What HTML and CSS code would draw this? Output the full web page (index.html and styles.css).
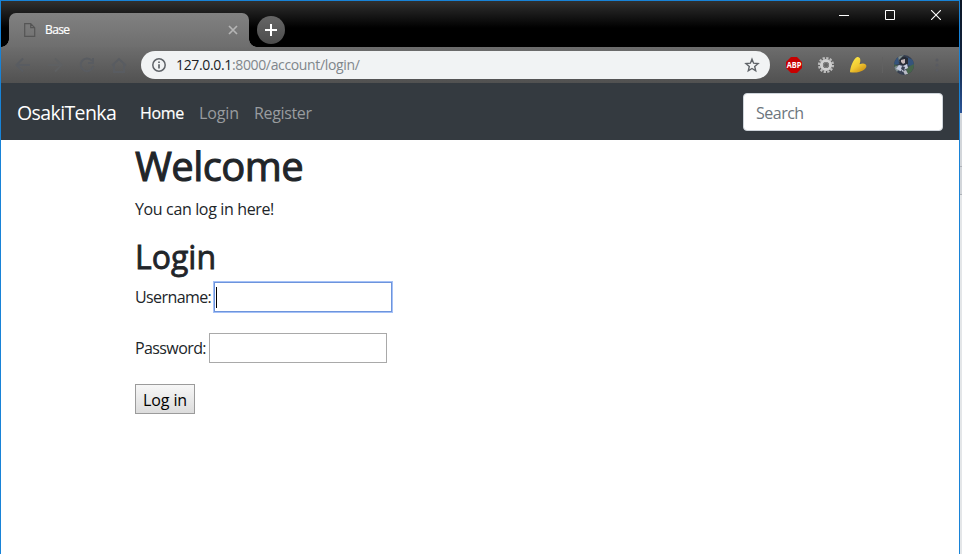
FILE: index.html
```
<!DOCTYPE html>
<html lang="en">
<head>
<meta charset="utf-8">
<title>Base</title>
<link rel="stylesheet" href="styles.css">
</head>
<body>
<div class="desktop">
<div class="window">
  <div class="tabstrip">
    <div class="tab">
      <svg class="file" width="12" height="14" viewBox="0 0 12 14" fill="none" stroke="#555" stroke-width="1.2"><path d="M.7.7h6l4 4v8.6H.7zM6.7.7v4h4"/></svg>
      <span class="tab-title">Base</span>
      <svg class="tab-close" width="10" height="10" viewBox="0 0 10 10" stroke="#b5b5b5" stroke-width="1.7"><path d="M1 1l8 8M9 1L1 9"/></svg>
    </div>
    <div class="new-tab"><svg width="12" height="12" viewBox="0 0 12 12" stroke="#fff" stroke-width="2"><path d="M6 0v12M0 6h12"/></svg></div>
    <div class="controls">
      <svg width="10" height="10" viewBox="0 0 10 10" stroke="#fff"><path d="M0 5.5h10"/></svg>
      <svg width="10" height="10" viewBox="0 0 10 10" fill="none" stroke="#fff"><path d="M.5.5h9v9h-9z"/></svg>
      <svg width="10" height="10" viewBox="0 0 10 10" stroke="#fff" stroke-width="1.1"><path d="M0 0l10 10M10 0L0 10"/></svg>
    </div>
  </div>
  <div class="toolbar">
    <div class="history">
      <svg width="16" height="16" viewBox="0 0 16 16" fill="none" stroke="#595c61" stroke-width="2"><path d="M15 8H2M8 1.500L1.500 8L8 14.500"/></svg>
      <svg width="16" height="16" viewBox="0 0 16 16" fill="none" stroke="#5e6062" stroke-width="2"><path d="M1 8h13M8 1.500L14.500 8L8 14.500"/></svg>
      <svg width="16" height="16" viewBox="0 0 16 16" fill="none" stroke="#595c61" stroke-width="2"><path d="M13 4A6.300 6.300 0 1 0 14.200 9M14 1v5H9"/></svg>
      <svg width="16" height="16" viewBox="0 0 16 16" fill="none" stroke="#595c61" stroke-width="2"><path d="M1 8.500L8 2l7 6.500M3 7.500V15h10V7.500"/></svg>
    </div>
    <div class="address">
      <svg width="14" height="14" viewBox="0 0 14 14" fill="none" stroke="#5f6368"><circle cx="7" cy="7" r="6.200" stroke-width="1.500"/><path d="M7 6.200v4.300M7 3.500v1.600" stroke-width="1.700"/></svg>
      <span class="url"><b>127.0.0.1</b>:8000/account/login/</span>
      <svg class="star" width="16" height="16" viewBox="0 0 16 16" fill="none" stroke="#5f6368" stroke-width="1.400"><path d="M8 2.200l1.600 4 4.500.4-3.400 2.900 1 4.300L8 11.500l-3.700 2.300 1-4.300-3.400-2.900 4.500-.4z"/></svg>
    </div>
    <svg class="abp" width="18" height="18" viewBox="0 0 18 18"><path d="M6 1h6l5 5v6l-5 5H6l-5-5V6z" fill="#c80000"/><text x="9" y="12" text-anchor="middle" textLength="14.500" lengthAdjust="spacingAndGlyphs">ABP</text></svg>
    <svg class="gear" width="18" height="18" viewBox="0 0 18 18" fill="none"><circle cx="9" cy="9" r="7" stroke="#bdbdbd" stroke-width="2.200" stroke-dasharray="2.300 1.365"/><circle cx="9" cy="9" r="4.600" stroke="#d0d0d0" stroke-width="3"/><circle cx="9" cy="9" r="2.500" fill="#666" stroke="#888"/></svg>
    <svg class="heart" width="18" height="18" viewBox="0 0 18 18"><defs><linearGradient id="gold" x1="0" y1="0" x2=".7" y2="1"><stop offset="0" stop-color="#fff04d"/><stop offset=".6" stop-color="#f1c832"/><stop offset="1" stop-color="#cf9416"/></linearGradient></defs><path d="M1 16.200C1 12 4.500 2 8.300 1c3.200-.4 3.800 3.500 2.200 7.300 3.500-1.500 6.800-.7 6.900 1.700C17.400 13.500 10 18 1 16.200z" fill="url(#gold)"/></svg>
    <i class="divider"></i>
    <svg class="avatar" width="20" height="20" viewBox="0 0 20 20"><defs><clipPath id="round"><circle cx="10" cy="10" r="10"/></clipPath></defs><g clip-path="url(#round)"><path fill="#343e50" d="M0 0h20v20H0z"/><path fill="#35547c" d="M12 2l8 3v7l-7-2zM0 4l4-2 1 7-5 1z"/><path fill="#46654a" d="M12 13l8-4v8l-7 3zM0 9l4 2-3 5z"/><path fill="#7d8b8c" d="M4 1l5-1 2 3-6 4zM0 12l5-2 2 4-6 4z"/><path fill="#272c36" d="M5 5l4-4 5 2v6l-3 2-5-2z"/><path fill="#c5b9ba" d="M7 5l4-1v4L9 9 7 7z"/><path fill="#c5cbdd" d="M5 10l4 1 4-2 1 4-4 2-3 3-2-3-3-1z"/><path fill="#3b4255" d="M8 11l3 1-1 4-3-2zM5 17l3-2v5z"/><path fill="#b9bac5" d="M9 16l3-1 2 4-3 1z"/></g></svg>
    <svg class="more" width="4" height="14" viewBox="0 0 4 14" fill="#595b61"><circle cx="2" cy="2" r="1.500"/><circle cx="2" cy="7" r="1.500"/><circle cx="2" cy="12" r="1.500"/></svg>
  </div>
  <nav class="navbar">
    <span class="brand">OsakiTenka</span>
    <span class="link home">Home</span>
    <span class="link login">Login</span>
    <span class="link register">Register</span>
    <div class="search"><span>Search</span></div>
  </nav>
  <main>
    <h1>Welcome</h1>
    <p>You can log in here!</p>
    <h2>Login</h2>
    <div class="row"><label class="user">Username:</label><div class="field focused"><i class="caret"></i></div></div>
    <div class="row"><label class="pass">Password:</label><div class="field"></div></div>
    <div class="button">Log in</div>
  </main>
</div>
<div class="behind"></div>
</div>
</body>
</html>
```
FILE: styles.css
```
* { box-sizing: border-box; }
body { margin: 0; overflow: hidden; font: 16px/24px "Open Sans", "Noto Sans", sans-serif; color: #212529; background: #fff; }
svg { display: block; flex: none; }
.desktop { display: flex; width: 962px; height: 554px; }
.window { width: 960px; flex: none; border: 1px solid #1883d7; border-bottom: 0; background: #fff; }
.behind { width: 2px; background: linear-gradient(#0b1524 0, #122440 60px, #2a5599 113px, #d3d6da 113px, #d3d6da 166px, #aeb2b8 166px, #aeb2b8 167px, #d3d6da 167px, #d3d6da 194px, #aeb2b8 194px, #aeb2b8 195px, #e4e6e8 195px); }
.tabstrip { height: 46px; display: flex; align-items: flex-start; background: linear-gradient(#303030, #000 27px); }
.tab { position: relative; width: 240px; height: 34px; margin: 12px 0 0 8px; padding: 0 11px 0 15px; display: flex; align-items: center; border-radius: 7px 7px 0 0; background: linear-gradient(#818181, #6e6e6e); }
.tab::before, .tab::after { content: ""; position: absolute; bottom: 0; width: 8px; height: 8px; }
.tab::before { left: -8px; background: radial-gradient(circle at 0 0, transparent 7.5px, #6e6e6e 8px); }
.tab::after { right: -8px; background: radial-gradient(circle at 100% 0, transparent 7.5px, #6e6e6e 8px); }
.tab-title { margin-left: 9px; font-size: 12px; line-height: 16px; color: #fff; letter-spacing: -.6px; -webkit-text-stroke: .2px #fff; }
.tab-close { margin-left: auto; }
.new-tab { width: 28px; height: 28px; margin: 15px 0 0 8px; border-radius: 50%; display: flex; align-items: center; justify-content: center; background: linear-gradient(#666, #4c4c4c); }
.controls { display: flex; gap: 36px; margin: 9px 18px 0 auto; }
.toolbar { height: 36px; display: flex; align-items: center; background: linear-gradient(#6d6d6d, #515151); }
.history { display: flex; gap: 16px; width: 140px; padding-left: 14px; }
.address { width: 629px; height: 28px; border-radius: 14px; background: #f1f3f4; display: flex; align-items: center; padding: 0 10px 0 11px; }
.url { margin-left: 10px; font-size: 14px; line-height: 20px; color: #80868b; white-space: nowrap; letter-spacing: -.35px; }
.url b { font-weight: 400; color: #202124; }
.star { margin-left: auto; }
.abp { margin-left: 15px; }
.abp text { font: bold 8px "Open Sans", sans-serif; fill: #fff; }
.gear { margin-left: 14px; }
.heart { margin-left: 14px; }
.divider { width: 1px; height: 16px; margin-left: 15px; background: #616161; }
.avatar { margin-left: 11px; }
.more { margin-left: 21px; }
.navbar { height: 57px; background: #343a40; display: flex; align-items: center; padding: 0 16px; white-space: nowrap; }
.brand { width: 99px; padding-top: 2px; font-size: 19.5px; letter-spacing: -.6px; color: #fff; margin-right: 24px; }
.link { padding-top: 2px; color: #999c9f; margin-right: 16px; letter-spacing: -.35px; }
.home { color: #fff; width: 43px; -webkit-text-stroke: .2px #fff; }
.login { width: 39px; letter-spacing: -.1px; }
.register { width: 58px; }
.search { width: 200px; height: 38px; margin-left: auto; border: 1px solid #ced4da; border-radius: 4px; background: #fff; color: #6c757d; padding: 7px 12px; letter-spacing: -.5px; }
main { padding-left: 134px; white-space: nowrap; }
h1, h2, p { margin: 0; }
h1 { font-size: 40px; line-height: 48px; font-weight: 400; padding-top: 2px; margin-bottom: 7px; letter-spacing: -.6px; -webkit-text-stroke: 1px #212529; }
p { margin-bottom: 16px; letter-spacing: -.36px; }
h2 { font-size: 32px; line-height: 38px; font-weight: 400; padding-top: 1px; margin-bottom: 6px; -webkit-text-stroke: .8px #212529; }
.row { display: flex; align-items: center; height: 30px; margin-bottom: 21px; letter-spacing: -.6px; }
.user { width: 79px; }
.pass { width: 74px; }
.field { width: 178px; height: 30px; border: 1px solid #a9a9a9; background: #fff; }
.focused { border-color: #6d94dc; box-shadow: 0 0 0 1px #a5c1f7; padding: 4px 0 0 1px; }
.caret { display: block; width: 1px; height: 21px; background: #000; }
.button { width: 60px; height: 30px; border: 1px solid #9b9b9b; background: linear-gradient(#f7f7f7, #dcdcdc); color: #000; padding: 3px 7px; letter-spacing: -.1px; }
```
